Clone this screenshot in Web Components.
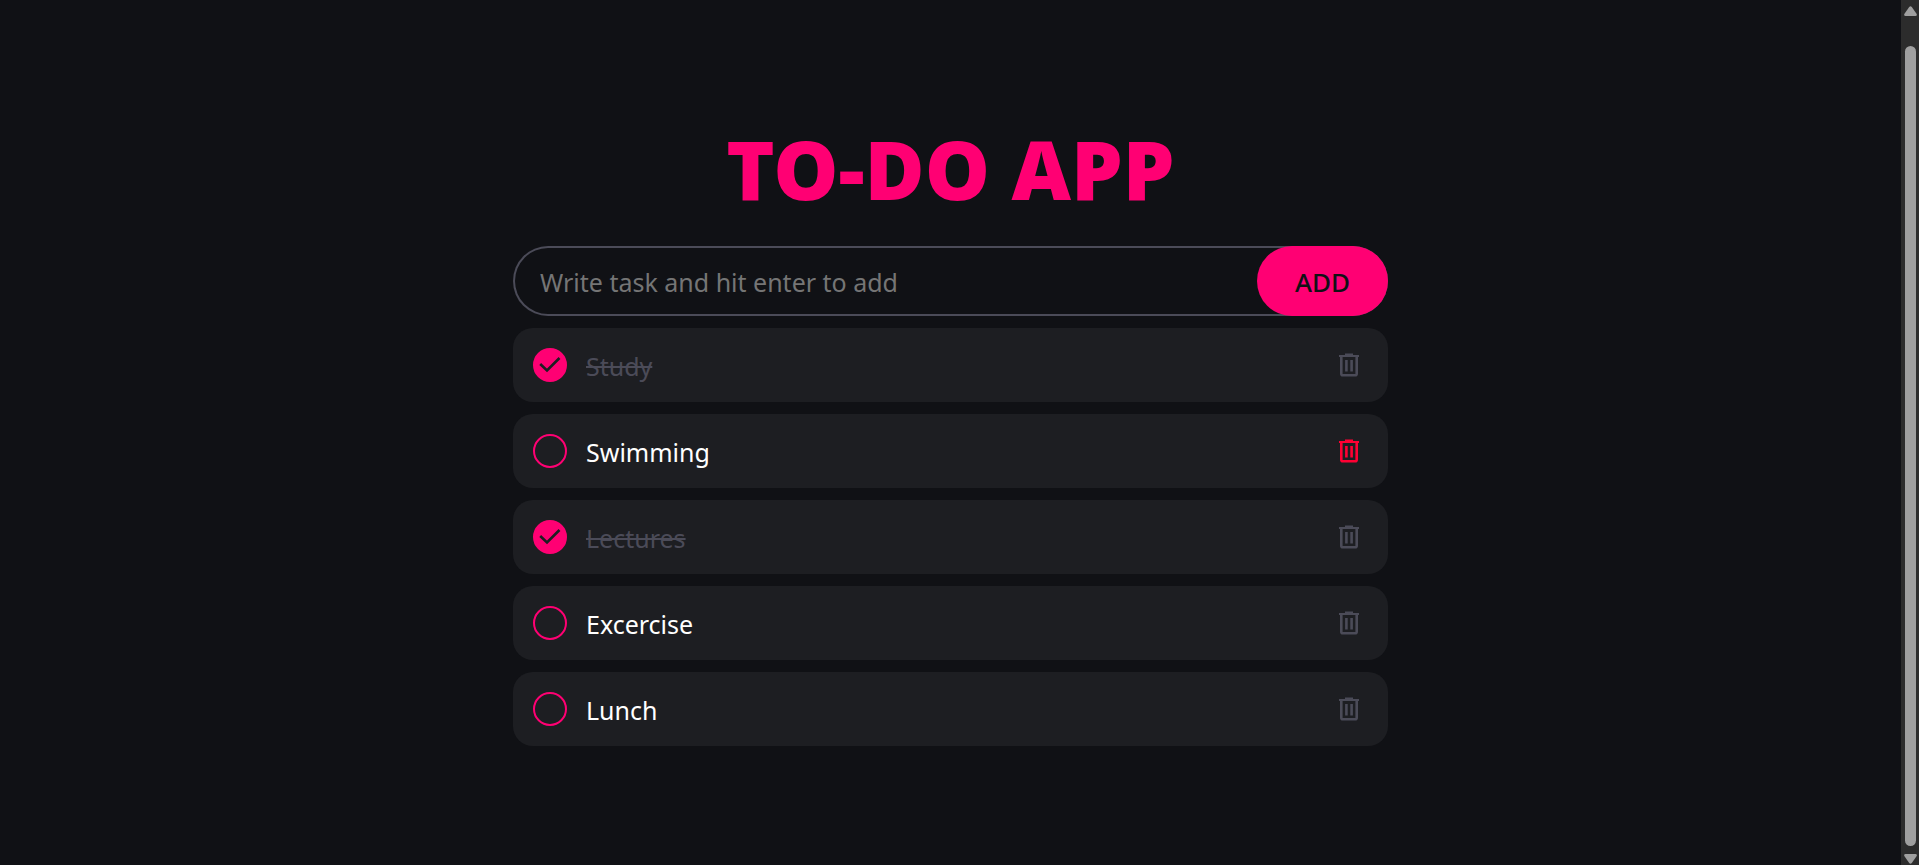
<!DOCTYPE html>
<html lang="en">
<head>
<meta charset="utf-8">
<title>To-Do App</title>
<style>
html { background: #101115; }
body { margin: 0; font-family: "Segoe UI", "Noto Sans", "Open Sans", sans-serif; font-size: 25px; line-height: 36px; color: #fff; }
</style>
</head>
<body>
<todo-app></todo-app>

<template id="app">
<style>
:host { display: flex; min-height: 100vh; --accent: #ff0073; --muted: #4b4b58; --card: #1d1e22; --page: #101115; }
main { flex: 1; min-width: 0; box-sizing: border-box; padding: 120px 20px 40px; }
.column { max-width: 875px; margin: 0 auto; }
h1 { margin: 0 0 30px; font-size: 82px; line-height: 96px; font-weight: 900; text-align: center; color: var(--accent); }
ul { list-style: none; margin: 12px 0 0; padding: 0; display: grid; gap: 12px; }
</style>
<main><div class="column">
<h1>TO-DO APP</h1>
<todo-form></todo-form>
<ul>
<li><todo-item done>Study</todo-item></li>
<li><todo-item danger>Swimming</todo-item></li>
<li><todo-item done>Lectures</todo-item></li>
<li><todo-item>Excercise</todo-item></li>
<li><todo-item>Lunch</todo-item></li>
</ul>
</div></main>
<scroll-rail></scroll-rail>
</template>

<template id="form">
<style>
:host { display: block; }
form { display: flex; height: 70px; border-radius: 35px; box-shadow: inset 0 0 0 2px var(--muted); }
input, button { font: inherit; border: 0; margin: 0; }
input { flex: 1; min-width: 0; padding: 2px 27px 0; background: none; color: #fff; outline: none; }
input::placeholder { color: #757575; opacity: 1; }
button { width: 131px; padding: 2px 0 0; border-radius: 35px; background: var(--accent); color: var(--page); font-size: 26px; font-weight: 500; cursor: pointer; }
</style>
<form>
<input type="text" aria-label="New task" placeholder="Write task and hit enter to add">
<button type="submit">ADD</button>
</form>
</template>

<template id="item">
<style>
:host { display: flex; align-items: center; box-sizing: border-box; height: 74px; padding: 0 20px; border-radius: 20px; background: var(--card); }
label { flex: 1; display: flex; align-items: center; gap: 19px; cursor: pointer; }
.box { display: grid; }
.box > * { grid-area: 1 / 1; }
input { appearance: none; box-sizing: border-box; width: 34px; height: 34px; margin: 0; border: 2px solid var(--accent); border-radius: 50%; }
input:checked { background: var(--accent); }
.tick { width: 34px; height: 34px; fill: none; stroke: var(--card); stroke-width: 2.6; visibility: hidden; pointer-events: none; }
input:checked + .tick { visibility: visible; }
.text { padding-top: 2px; }
:host([done]) .text { color: var(--muted); text-decoration: line-through; text-decoration-thickness: 2px; }
button { display: grid; place-items: center; width: 38px; height: 38px; padding: 0; border: 0; background: none; color: var(--muted); cursor: pointer; }
:host([danger]) button { color: #ff0033; }
.bin { width: 20px; height: 24px; fill: none; stroke: currentColor; stroke-width: 2.6; }
</style>
<label>
<span class="box"><input type="checkbox"><svg class="tick" viewBox="0 0 34 34" aria-hidden="true"><path d="M7.2 16 14 22.5 26.5 10"/></svg></span>
<span class="text"><slot></slot></span>
</label>
<button type="button" aria-label="Delete task">
<svg class="bin" viewBox="0 0 20 24" aria-hidden="true"><path stroke-width="2.2" d="M0 3H20M6 1.6H14"/><path d="M2.3 3V20.7Q2.3 22.2 3.8 22.2H16.2Q17.7 22.2 17.7 20.7V3M7.4 7V18.5M12.6 7V18.5"/></svg>
</button>
</template>

<template id="rail">
<style>
:host { position: sticky; top: 0; display: flex; flex-direction: column; align-items: center; box-sizing: border-box; width: 18px; height: 100vh; padding: 6px 0 1px; background: #2c2c2c; }
svg { width: 13px; height: 10px; fill: #9f9f9f; }
.thumb { flex: 1; width: 11px; margin: 30px 0 8px; border-radius: 6px; background: #9f9f9f; }
</style>
<svg viewBox="0 0 13 10" aria-hidden="true"><path d="M5.2 1Q6.5-.6 7.8 1L12.7 8Q13.2 10 11.5 10H1.5Q-.2 10 .3 8Z"/></svg>
<div class="thumb"></div>
<svg viewBox="0 0 13 10" aria-hidden="true"><path d="M5.2 9Q6.5 10.6 7.8 9L12.7 2Q13.2 0 11.5 0H1.5Q-.2 0 .3 2Z"/></svg>
</template>

<script>
class TemplateElement extends HTMLElement {
  constructor() {
    super();
    const source = document.getElementById(this.constructor.template);
    this.attachShadow({ mode: "open" }).append(document.importNode(source.content, true));
  }
}

class ScrollRail extends TemplateElement { static template = "rail"; }

class TodoItem extends TemplateElement {
  static template = "item";
  connectedCallback() {
    const box = this.shadowRoot.querySelector("input");
    box.checked = this.hasAttribute("done");
    box.onchange = () => this.toggleAttribute("done", box.checked);
    this.shadowRoot.querySelector("button").onclick = () => this.closest("li").remove();
  }
}

class TodoForm extends TemplateElement {
  static template = "form";
  connectedCallback() {
    const input = this.shadowRoot.querySelector("input");
    this.shadowRoot.querySelector("form").onsubmit = (event) => {
      event.preventDefault();
      const text = input.value.trim();
      if (text) this.dispatchEvent(new CustomEvent("add-task", { detail: text }));
      input.value = "";
    };
  }
}

class TodoApp extends TemplateElement {
  static template = "app";
  connectedCallback() {
    this.shadowRoot.querySelector("todo-form").addEventListener("add-task", (event) => {
      const row = document.createElement("li");
      const item = document.createElement("todo-item");
      item.textContent = event.detail;
      row.append(item);
      this.shadowRoot.querySelector("ul").append(row);
    });
  }
}

customElements.define("scroll-rail", ScrollRail);
customElements.define("todo-item", TodoItem);
customElements.define("todo-form", TodoForm);
customElements.define("todo-app", TodoApp);
</script>
</body>
</html>
